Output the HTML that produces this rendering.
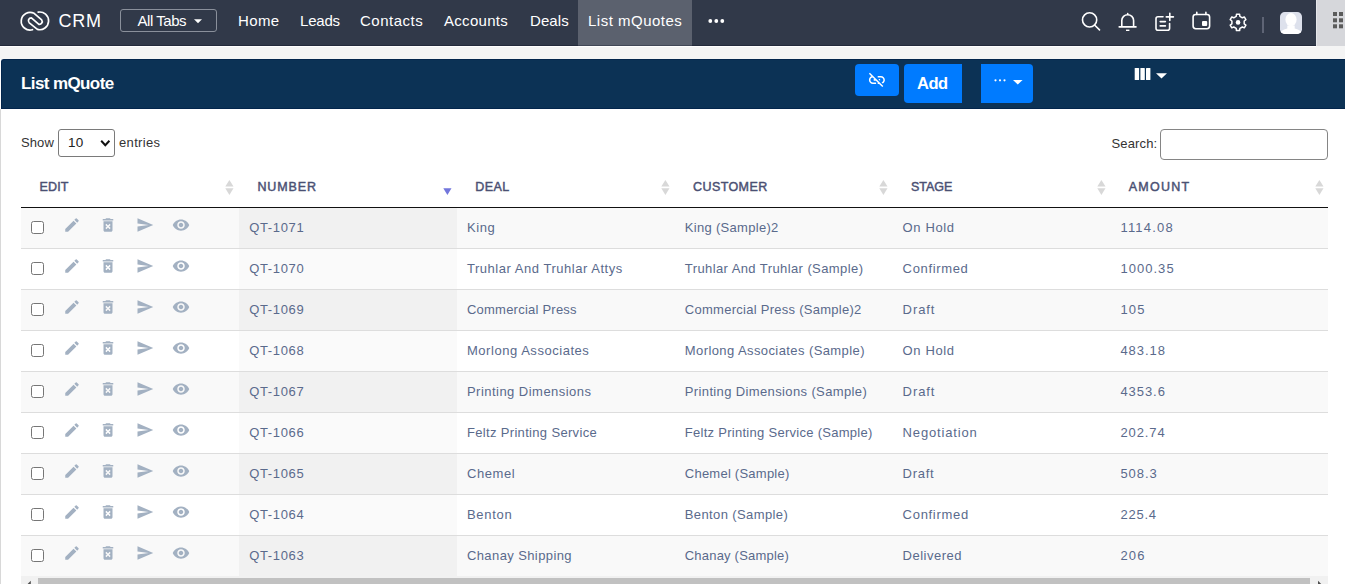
<!DOCTYPE html>
<html lang="en"><head><meta charset="utf-8"><title>List mQuote</title>
<style>
*{box-sizing:border-box}
html,body{margin:0;padding:0}
body{width:1345px;height:584px;overflow:hidden;background:#fff;font-family:"Liberation Sans",sans-serif;position:relative}
#nav{position:absolute;left:0;top:0;width:1345px;height:46px;background:#313949}
#nav:after{content:"";position:absolute;left:0;top:45px;width:1316px;height:1px;background:rgba(0,5,25,.28)}
#gap{position:absolute;left:0;top:46px;width:1345px;height:13px;background:#f4f4f4}
#gap:after{content:"";position:absolute;left:0;top:0;width:1316px;height:1px;background:#fff}
#nav .t{position:absolute;top:0;height:45px;line-height:41px;color:#fff;font-size:15px;white-space:nowrap}
#act{position:absolute;left:578px;top:0;width:114px;height:46px;background:#5b616e}
#crm{position:absolute;left:58.5px;top:0;line-height:42px;font-size:18px;color:#fff;letter-spacing:.8px}
#alltabs{position:absolute;left:120px;top:9px;width:97px;height:23px;border:1px solid #8a909b;border-radius:3px}
#grid{position:absolute;left:1316px;top:0;width:29px;height:46px;background:#d6d7db;border-left:1px solid #e6e6ea}
#navsvg{position:absolute;left:0;top:0}
#hdr{position:absolute;left:1px;top:59px;width:1344px;height:50px;background:#0c3255;border:1px solid #03254c;border-right:none;border-top-left-radius:3px}
#lb{position:absolute;left:0;top:109px;width:1px;height:475px;background:#d8d8d8}
#title{position:absolute;left:21px;top:59px;line-height:49px;color:#fff;font-weight:bold;font-size:17px;letter-spacing:-.6px;white-space:nowrap}
.btn{position:absolute;background:#007bff;color:#fff}
#b1{left:855px;top:64px;width:44px;height:32px;border-radius:4px}
#b2{left:904px;top:64px;width:58px;height:39px;border-radius:4px 0 0 4px}
#b3{left:981px;top:64px;width:52px;height:39px;border-radius:0 4px 4px 0}
#add{position:absolute;left:917px;top:64px;line-height:39px;font-size:16.5px;font-weight:bold;color:#fff;letter-spacing:-.5px}
#hsvg{position:absolute;left:0;top:59px}
.lbl{position:absolute;font-size:13px;color:#333;white-space:nowrap;line-height:18px;letter-spacing:.5px}
#sel{position:absolute;left:58px;top:129px;width:57px;height:28px;border:1px solid #7a7a7a;border-radius:3px;background:#fff}
#selv{position:absolute;left:68px;top:134px;font-size:13.5px;color:#222;line-height:18px;letter-spacing:.2px}
#srch{position:absolute;left:1160px;top:129px;width:168px;height:31px;border:1px solid #858585;border-radius:4px;background:#fff}
#tbl{position:absolute;left:21px;top:166px;width:1307px;border-collapse:collapse;table-layout:fixed;font-size:13px}
#tbl th{height:41px;text-align:left;padding:1px 0 0 18.6px;color:#4a5073;font-weight:normal;-webkit-text-stroke:.45px #4a5073;border-bottom:1px solid #111;font-size:12.5px;white-space:nowrap}
#tbl td{height:41px;padding:0 0 1px 10.3px;color:#5a6a8c;border-top:1px solid #ddd;white-space:nowrap;letter-spacing:.5px}
#tbl tbody tr:first-child td{border-top:1px solid #fff}
tr.odd td{background:#f9f9f9}
tr.odd td.s{background:#f1f1f1}
tr.even td{background:#fff}
tr.even td.s{background:#fafafa}
td.e{position:relative}
.cb{position:absolute;left:10px;top:13px;width:13px;height:13px;margin:0}
.ic{position:absolute;width:18px;height:18px;fill:#a3b1c2;top:8px}
.i1{left:41.7px}.i2{left:77.8px}.i3{left:114.7px}.i4{left:150.7px}
#ssvg{position:absolute;left:0;top:166px}
#sb{position:absolute;left:21px;top:576px;width:1307px;height:8px;background:#f1f1f1}
#sbt{position:absolute;left:38px;top:578px;width:1272px;height:6px;background:#c1c1c1}
</style></head><body>
<div id="nav">
<div id="act"></div>
<div id="crm">CRM</div>
<div id="alltabs"></div>
<div class="t" style="left:137.5px;letter-spacing:-.45px">All Tabs</div>
<div class="t" style="left:238px;letter-spacing:.4px">Home</div>
<div class="t" style="left:300px;letter-spacing:-.2px">Leads</div>
<div class="t" style="left:360px;letter-spacing:.5px">Contacts</div>
<div class="t" style="left:444px;letter-spacing:.3px">Accounts</div>
<div class="t" style="left:530px;letter-spacing:.1px">Deals</div>
<div class="t" style="left:588px;letter-spacing:.5px">List mQuotes</div>
<div id="grid"></div>
<svg id="navsvg" width="1345" height="45" viewBox="0 0 1345 45" fill="none" stroke="#fff" stroke-width="1.6" stroke-linecap="round" stroke-linejoin="round">
<path d="M32.5 29.7 A8.85 8.85 0 1 1 34.1 13.3 L41.7 19.9 A2.9 2.9 0 0 1 38.9 24.4 L31.4 17.9 A2.9 2.9 0 0 0 29.3 22.9 L37.4 29.4 A8.85 8.85 0 1 0 38.17 12.15" stroke-width="1.7"/>
<path d="M194 19.2h8l-4 4z" fill="#fff" stroke="none"/>
<circle cx="710.3" cy="21" r="1.9" fill="#fff" stroke="none"/><circle cx="716.3" cy="21" r="1.9" fill="#fff" stroke="none"/><circle cx="722.3" cy="21" r="1.9" fill="#fff" stroke="none"/>
<circle cx="1089.6" cy="19.9" r="7.1"/><path d="M1094.8 25.2L1099.5 29.9"/>
<path d="M1121.8 26.8V20.6a5.9 5.9 0 0 1 11.8 0V26.8M1119.2 26.9H1136M1127.7 13.6v1"/><rect x="1126" y="29.6" width="3.4" height="1.4" fill="#fff" stroke="none"/>
<path d="M1163 16.8H1158a2 2 0 0 0-2 2V28.3a2 2 0 0 0 2 2H1167.6a2 2 0 0 0 2-2V23.6M1160.2 21.6H1165.4M1160.2 25.9H1165.4M1169.8 13.2V20.4M1166.3 16.9H1173.4"/>
<rect x="1193.1" y="14.5" width="16.5" height="14.2" rx="2.6"/><path d="M1196.8 12.2V14.5M1205.9 12.2V14.5"/><rect x="1202" y="21.1" width="5.2" height="5" rx="1" fill="#fff" stroke="none"/>
<path d="M1236.21 16.38 L1236.47 14.25 L1239.63 14.25 L1239.89 16.38 L1242.35 17.79 L1244.31 16.95 L1245.90 19.70 L1244.19 20.98 L1244.19 23.82 L1245.90 25.10 L1244.31 27.85 L1242.35 27.01 L1239.89 28.42 L1239.63 30.55 L1236.47 30.55 L1236.21 28.42 L1233.75 27.01 L1231.79 27.85 L1230.20 25.10 L1231.91 23.82 L1231.91 20.98 L1230.20 19.70 L1231.79 16.95 L1233.75 17.79Z" stroke-width="1.5"/><circle cx="1238.05" cy="22.4" r="2.3" fill="#fff" stroke="none"/>
<rect x="1262" y="17" width="2" height="16" fill="#5e6475" stroke="none"/>
<rect x="1280" y="12" width="22" height="22" rx="4.7" fill="#dde1ec" stroke="none"/>
<clipPath id="av"><rect x="1280" y="12" width="22" height="22" rx="4.7"/></clipPath>
<filter id="bl" x="-20%" y="-20%" width="140%" height="140%"><feGaussianBlur stdDeviation=".7"/></filter><g clip-path="url(#av)"><g filter="url(#bl)" fill="#fff" stroke="none"><ellipse cx="1291" cy="19.6" rx="5.6" ry="6.6"/><path d="M1279 36c0-5 4-6 8.300-7.500v-3h7.400v3c4.300 1.500 8.300 2.500 8.300 7.500z"/></g></g>
<g fill="#5b5b5b" stroke="none"><rect x="1333" y="12" width="4" height="4"/><rect x="1339" y="12" width="4" height="4"/><rect x="1333" y="18.300" width="4" height="4"/><rect x="1339" y="18.300" width="4" height="4"/><rect x="1333" y="24.300" width="4" height="4"/><rect x="1339" y="24.300" width="4" height="4"/></g>
</svg>
</div>
<div id="gap"></div>
<div id="hdr"></div>
<div id="lb"></div>
<div id="title">List mQuote</div>
<div class="btn" id="b1"></div><div class="btn" id="b2"></div><div class="btn" id="b3"></div>
<div id="add">Add</div>
<svg id="hsvg" width="1345" height="50" viewBox="0 59 1345 50" fill="#fff">
<g transform="translate(867.300 70.300) scale(0.8)"><path d="M17 7h-4v1.900h4c1.710 0 3.100 1.390 3.100 3.100 0 1.430-.98 2.630-2.310 2.980l1.460 1.460C20.880 15.610 22 13.950 22 12c0-2.760-2.240-5-5-5zm-1 4h-2.190l2 2H16zM2 4.270l3.110 3.110C3.290 8.120 2 9.910 2 12c0 2.760 2.240 5 5 5h4v-1.900H7c-1.710 0-3.100-1.390-3.100-3.100 0-1.590 1.210-2.900 2.760-3.070L8.730 11H8v2h2.730L13 15.270V17h1.730l4.010 4L20 19.740 3.270 3 2 4.270z"/></g>
<circle cx="995.500" cy="80.300" r="1.100"/><circle cx="1000" cy="80.300" r="1.100"/><circle cx="1004.500" cy="80.300" r="1.100"/>
<path d="M1013 80h9.600l-4.800 4.600z"/>
<rect x="1134.700" y="68" width="4.400" height="12" rx=".6"/><rect x="1140.400" y="68" width="4.400" height="12" rx=".6"/><rect x="1146" y="68" width="4.400" height="12" rx=".6"/>
<path d="M1156 73.200h11l-5.500 5.200z"/>
</svg>
<div class="lbl" style="left:21px;top:134px;letter-spacing:.1px">Show</div>
<div id="sel"></div><div id="selv">10</div>
<svg style="position:absolute;left:100px;top:139px" width="11" height="9" viewBox="0 0 11 9" fill="none" stroke="#111" stroke-width="2"><path d="M1.200 1.800L5.300 6.200 9.400 1.800"/></svg>
<div class="lbl" style="left:119px;top:134px;letter-spacing:.35px">entries</div>
<div class="lbl" style="left:1111.5px;top:135px;letter-spacing:.15px">Search:</div>
<div id="srch"></div>
<table id="tbl"><thead><tr><th style="letter-spacing:.1px">EDIT</th><th style="letter-spacing:.9px">NUMBER</th><th style="letter-spacing:.4px">DEAL</th><th style="letter-spacing:.4px">CUSTOMER</th><th style="letter-spacing:0">STAGE</th><th style="letter-spacing:1.25px">AMOUNT</th></tr></thead>
<tbody>
<tr class="odd"><td class="e"><input type="checkbox" class="cb"><svg class="ic i1" viewBox="0 0 24 24"><path d="M3 17.25V21h3.75L17.81 9.94l-3.75-3.75L3 17.25zM20.71 7.04a1 1 0 0 0 0-1.41l-2.34-2.34a1 1 0 0 0-1.41 0l-1.83 1.83 3.75 3.75 1.83-1.83z"/></svg><svg class="ic i2" viewBox="0 0 24 24"><path d="M6 19c0 1.1.9 2 2 2h8c1.1 0 2-.9 2-2V7H6v12zm2.46-7.12l1.41-1.41L12 12.59l2.12-2.12 1.41 1.41L13.41 14l2.12 2.12-1.41 1.41L12 15.41l-2.12 2.12-1.41-1.41L10.59 14l-2.13-2.12zM15.5 4l-1-1h-5l-1 1H5v2h14V4z"/></svg><svg class="ic i3" viewBox="0 0 24 24"><path d="M2.01 21L23 12 2.01 3 2 10l15 2-15 2z"/></svg><svg class="ic i4" viewBox="0 0 24 24"><path d="M12 4.500C7 4.500 2.730 7.610 1 12c1.730 4.390 6 7.500 11 7.500s9.270-3.110 11-7.500c-1.730-4.390-6-7.500-11-7.500zM12 17c-2.760 0-5-2.240-5-5s2.240-5 5-5 5 2.240 5 5-2.240 5-5 5zm0-8c-1.660 0-3 1.340-3 3s1.340 3 3 3 3-1.340 3-3-1.340-3-3-3z"/></svg></td><td class="s" style="letter-spacing:0.67px">QT-1071</td><td style="letter-spacing:0.57px">King</td><td style="letter-spacing:0.30px">King (Sample)2</td><td style="letter-spacing:0.63px">On Hold</td><td style="letter-spacing:1.20px">1114.08</td></tr>
<tr class="even"><td class="e"><input type="checkbox" class="cb"><svg class="ic i1" viewBox="0 0 24 24"><path d="M3 17.25V21h3.75L17.81 9.94l-3.75-3.75L3 17.25zM20.71 7.04a1 1 0 0 0 0-1.41l-2.34-2.34a1 1 0 0 0-1.41 0l-1.83 1.83 3.75 3.75 1.83-1.83z"/></svg><svg class="ic i2" viewBox="0 0 24 24"><path d="M6 19c0 1.1.9 2 2 2h8c1.1 0 2-.9 2-2V7H6v12zm2.46-7.12l1.41-1.41L12 12.59l2.12-2.12 1.41 1.41L13.41 14l2.12 2.12-1.41 1.41L12 15.41l-2.12 2.12-1.41-1.41L10.59 14l-2.13-2.12zM15.5 4l-1-1h-5l-1 1H5v2h14V4z"/></svg><svg class="ic i3" viewBox="0 0 24 24"><path d="M2.01 21L23 12 2.01 3 2 10l15 2-15 2z"/></svg><svg class="ic i4" viewBox="0 0 24 24"><path d="M12 4.500C7 4.500 2.730 7.610 1 12c1.730 4.390 6 7.500 11 7.500s9.270-3.110 11-7.500c-1.730-4.390-6-7.500-11-7.500zM12 17c-2.760 0-5-2.240-5-5s2.240-5 5-5 5 2.240 5 5-2.240 5-5 5zm0-8c-1.660 0-3 1.340-3 3s1.340 3 3 3 3-1.340 3-3-1.340-3-3-3z"/></svg></td><td class="s" style="letter-spacing:0.67px">QT-1070</td><td style="letter-spacing:0.53px">Truhlar And Truhlar Attys</td><td style="letter-spacing:0.41px">Truhlar And Truhlar (Sample)</td><td style="letter-spacing:0.65px">Confirmed</td><td style="letter-spacing:1.03px">1000.35</td></tr>
<tr class="odd"><td class="e"><input type="checkbox" class="cb"><svg class="ic i1" viewBox="0 0 24 24"><path d="M3 17.25V21h3.75L17.81 9.94l-3.75-3.75L3 17.25zM20.71 7.04a1 1 0 0 0 0-1.41l-2.34-2.34a1 1 0 0 0-1.41 0l-1.83 1.83 3.75 3.75 1.83-1.83z"/></svg><svg class="ic i2" viewBox="0 0 24 24"><path d="M6 19c0 1.1.9 2 2 2h8c1.1 0 2-.9 2-2V7H6v12zm2.46-7.12l1.41-1.41L12 12.59l2.12-2.12 1.41 1.41L13.41 14l2.12 2.12-1.41 1.41L12 15.41l-2.12 2.12-1.41-1.41L10.59 14l-2.13-2.12zM15.5 4l-1-1h-5l-1 1H5v2h14V4z"/></svg><svg class="ic i3" viewBox="0 0 24 24"><path d="M2.01 21L23 12 2.01 3 2 10l15 2-15 2z"/></svg><svg class="ic i4" viewBox="0 0 24 24"><path d="M12 4.500C7 4.500 2.730 7.610 1 12c1.730 4.390 6 7.500 11 7.500s9.270-3.110 11-7.500c-1.730-4.390-6-7.500-11-7.500zM12 17c-2.760 0-5-2.240-5-5s2.240-5 5-5 5 2.240 5 5-2.240 5-5 5zm0-8c-1.660 0-3 1.340-3 3s1.340 3 3 3 3-1.340 3-3-1.340-3-3-3z"/></svg></td><td class="s" style="letter-spacing:0.67px">QT-1069</td><td style="letter-spacing:0.23px">Commercial Press</td><td style="letter-spacing:0.27px">Commercial Press (Sample)2</td><td style="letter-spacing:0.90px">Draft</td><td style="letter-spacing:1.20px">105</td></tr>
<tr class="even"><td class="e"><input type="checkbox" class="cb"><svg class="ic i1" viewBox="0 0 24 24"><path d="M3 17.25V21h3.75L17.81 9.94l-3.75-3.75L3 17.25zM20.71 7.04a1 1 0 0 0 0-1.41l-2.34-2.34a1 1 0 0 0-1.41 0l-1.83 1.83 3.75 3.75 1.83-1.83z"/></svg><svg class="ic i2" viewBox="0 0 24 24"><path d="M6 19c0 1.1.9 2 2 2h8c1.1 0 2-.9 2-2V7H6v12zm2.46-7.12l1.41-1.41L12 12.59l2.12-2.12 1.41 1.41L13.41 14l2.12 2.12-1.41 1.41L12 15.41l-2.12 2.12-1.41-1.41L10.59 14l-2.13-2.12zM15.5 4l-1-1h-5l-1 1H5v2h14V4z"/></svg><svg class="ic i3" viewBox="0 0 24 24"><path d="M2.01 21L23 12 2.01 3 2 10l15 2-15 2z"/></svg><svg class="ic i4" viewBox="0 0 24 24"><path d="M12 4.500C7 4.500 2.730 7.610 1 12c1.730 4.390 6 7.500 11 7.500s9.270-3.110 11-7.500c-1.730-4.390-6-7.500-11-7.500zM12 17c-2.760 0-5-2.240-5-5s2.240-5 5-5 5 2.240 5 5-2.240 5-5 5zm0-8c-1.660 0-3 1.340-3 3s1.340 3 3 3 3-1.340 3-3-1.340-3-3-3z"/></svg></td><td class="s" style="letter-spacing:0.67px">QT-1068</td><td style="letter-spacing:0.54px">Morlong Associates</td><td style="letter-spacing:0.41px">Morlong Associates (Sample)</td><td style="letter-spacing:0.63px">On Hold</td><td style="letter-spacing:0.94px">483.18</td></tr>
<tr class="odd"><td class="e"><input type="checkbox" class="cb"><svg class="ic i1" viewBox="0 0 24 24"><path d="M3 17.25V21h3.75L17.81 9.94l-3.75-3.75L3 17.25zM20.71 7.04a1 1 0 0 0 0-1.41l-2.34-2.34a1 1 0 0 0-1.41 0l-1.83 1.83 3.75 3.75 1.83-1.83z"/></svg><svg class="ic i2" viewBox="0 0 24 24"><path d="M6 19c0 1.1.9 2 2 2h8c1.1 0 2-.9 2-2V7H6v12zm2.46-7.12l1.41-1.41L12 12.59l2.12-2.12 1.41 1.41L13.41 14l2.12 2.12-1.41 1.41L12 15.41l-2.12 2.12-1.41-1.41L10.59 14l-2.13-2.12zM15.5 4l-1-1h-5l-1 1H5v2h14V4z"/></svg><svg class="ic i3" viewBox="0 0 24 24"><path d="M2.01 21L23 12 2.01 3 2 10l15 2-15 2z"/></svg><svg class="ic i4" viewBox="0 0 24 24"><path d="M12 4.500C7 4.500 2.730 7.610 1 12c1.730 4.390 6 7.500 11 7.500s9.270-3.110 11-7.500c-1.730-4.390-6-7.500-11-7.500zM12 17c-2.760 0-5-2.240-5-5s2.240-5 5-5 5 2.240 5 5-2.240 5-5 5zm0-8c-1.660 0-3 1.340-3 3s1.340 3 3 3 3-1.340 3-3-1.340-3-3-3z"/></svg></td><td class="s" style="letter-spacing:0.67px">QT-1067</td><td style="letter-spacing:0.47px">Printing Dimensions</td><td style="letter-spacing:0.37px">Printing Dimensions (Sample)</td><td style="letter-spacing:0.90px">Draft</td><td style="letter-spacing:0.94px">4353.6</td></tr>
<tr class="even"><td class="e"><input type="checkbox" class="cb"><svg class="ic i1" viewBox="0 0 24 24"><path d="M3 17.25V21h3.75L17.81 9.94l-3.75-3.75L3 17.25zM20.71 7.04a1 1 0 0 0 0-1.41l-2.34-2.34a1 1 0 0 0-1.41 0l-1.83 1.83 3.75 3.75 1.83-1.83z"/></svg><svg class="ic i2" viewBox="0 0 24 24"><path d="M6 19c0 1.1.9 2 2 2h8c1.1 0 2-.9 2-2V7H6v12zm2.46-7.12l1.41-1.41L12 12.59l2.12-2.12 1.41 1.41L13.41 14l2.12 2.12-1.41 1.41L12 15.41l-2.12 2.12-1.41-1.41L10.59 14l-2.13-2.12zM15.5 4l-1-1h-5l-1 1H5v2h14V4z"/></svg><svg class="ic i3" viewBox="0 0 24 24"><path d="M2.01 21L23 12 2.01 3 2 10l15 2-15 2z"/></svg><svg class="ic i4" viewBox="0 0 24 24"><path d="M12 4.500C7 4.500 2.730 7.610 1 12c1.730 4.390 6 7.500 11 7.500s9.270-3.110 11-7.500c-1.730-4.390-6-7.500-11-7.500zM12 17c-2.760 0-5-2.240-5-5s2.240-5 5-5 5 2.240 5 5-2.240 5-5 5zm0-8c-1.660 0-3 1.340-3 3s1.340 3 3 3 3-1.340 3-3-1.340-3-3-3z"/></svg></td><td class="s" style="letter-spacing:0.67px">QT-1066</td><td style="letter-spacing:0.33px">Feltz Printing Service</td><td style="letter-spacing:0.28px">Feltz Printing Service (Sample)</td><td style="letter-spacing:0.84px">Negotiation</td><td style="letter-spacing:0.90px">202.74</td></tr>
<tr class="odd"><td class="e"><input type="checkbox" class="cb"><svg class="ic i1" viewBox="0 0 24 24"><path d="M3 17.25V21h3.75L17.81 9.94l-3.75-3.75L3 17.25zM20.71 7.04a1 1 0 0 0 0-1.41l-2.34-2.34a1 1 0 0 0-1.41 0l-1.83 1.83 3.75 3.75 1.83-1.83z"/></svg><svg class="ic i2" viewBox="0 0 24 24"><path d="M6 19c0 1.1.9 2 2 2h8c1.1 0 2-.9 2-2V7H6v12zm2.46-7.12l1.41-1.41L12 12.59l2.12-2.12 1.41 1.41L13.41 14l2.12 2.12-1.41 1.41L12 15.41l-2.12 2.12-1.41-1.41L10.59 14l-2.13-2.12zM15.5 4l-1-1h-5l-1 1H5v2h14V4z"/></svg><svg class="ic i3" viewBox="0 0 24 24"><path d="M2.01 21L23 12 2.01 3 2 10l15 2-15 2z"/></svg><svg class="ic i4" viewBox="0 0 24 24"><path d="M12 4.500C7 4.500 2.730 7.610 1 12c1.730 4.390 6 7.500 11 7.500s9.270-3.110 11-7.500c-1.730-4.390-6-7.500-11-7.500zM12 17c-2.760 0-5-2.240-5-5s2.240-5 5-5 5 2.240 5 5-2.240 5-5 5zm0-8c-1.660 0-3 1.340-3 3s1.340 3 3 3 3-1.340 3-3-1.340-3-3-3z"/></svg></td><td class="s" style="letter-spacing:0.67px">QT-1065</td><td style="letter-spacing:0.58px">Chemel</td><td style="letter-spacing:0.24px">Chemel (Sample)</td><td style="letter-spacing:0.70px">Draft</td><td style="letter-spacing:0.95px">508.3</td></tr>
<tr class="even"><td class="e"><input type="checkbox" class="cb"><svg class="ic i1" viewBox="0 0 24 24"><path d="M3 17.25V21h3.75L17.81 9.94l-3.75-3.75L3 17.25zM20.71 7.04a1 1 0 0 0 0-1.41l-2.34-2.34a1 1 0 0 0-1.41 0l-1.83 1.83 3.75 3.75 1.83-1.83z"/></svg><svg class="ic i2" viewBox="0 0 24 24"><path d="M6 19c0 1.1.9 2 2 2h8c1.1 0 2-.9 2-2V7H6v12zm2.46-7.12l1.41-1.41L12 12.59l2.12-2.12 1.41 1.41L13.41 14l2.12 2.12-1.41 1.41L12 15.41l-2.12 2.12-1.41-1.41L10.59 14l-2.13-2.12zM15.5 4l-1-1h-5l-1 1H5v2h14V4z"/></svg><svg class="ic i3" viewBox="0 0 24 24"><path d="M2.01 21L23 12 2.01 3 2 10l15 2-15 2z"/></svg><svg class="ic i4" viewBox="0 0 24 24"><path d="M12 4.500C7 4.500 2.730 7.610 1 12c1.730 4.390 6 7.500 11 7.500s9.270-3.110 11-7.500c-1.730-4.390-6-7.500-11-7.500zM12 17c-2.760 0-5-2.240-5-5s2.240-5 5-5 5 2.240 5 5-2.240 5-5 5zm0-8c-1.660 0-3 1.340-3 3s1.340 3 3 3 3-1.340 3-3-1.340-3-3-3z"/></svg></td><td class="s" style="letter-spacing:0.67px">QT-1064</td><td style="letter-spacing:0.70px">Benton</td><td style="letter-spacing:0.39px">Benton (Sample)</td><td style="letter-spacing:0.70px">Confirmed</td><td style="letter-spacing:0.75px">225.4</td></tr>
<tr class="odd"><td class="e"><input type="checkbox" class="cb"><svg class="ic i1" viewBox="0 0 24 24"><path d="M3 17.25V21h3.75L17.81 9.94l-3.75-3.75L3 17.25zM20.71 7.04a1 1 0 0 0 0-1.41l-2.34-2.34a1 1 0 0 0-1.41 0l-1.83 1.83 3.75 3.75 1.83-1.83z"/></svg><svg class="ic i2" viewBox="0 0 24 24"><path d="M6 19c0 1.1.9 2 2 2h8c1.1 0 2-.9 2-2V7H6v12zm2.46-7.12l1.41-1.41L12 12.59l2.12-2.12 1.41 1.41L13.41 14l2.12 2.12-1.41 1.41L12 15.41l-2.12 2.12-1.41-1.41L10.59 14l-2.13-2.12zM15.5 4l-1-1h-5l-1 1H5v2h14V4z"/></svg><svg class="ic i3" viewBox="0 0 24 24"><path d="M2.01 21L23 12 2.01 3 2 10l15 2-15 2z"/></svg><svg class="ic i4" viewBox="0 0 24 24"><path d="M12 4.500C7 4.500 2.730 7.610 1 12c1.730 4.390 6 7.500 11 7.500s9.270-3.110 11-7.500c-1.730-4.390-6-7.500-11-7.500zM12 17c-2.760 0-5-2.240-5-5s2.240-5 5-5 5 2.240 5 5-2.240 5-5 5zm0-8c-1.660 0-3 1.340-3 3s1.340 3 3 3 3-1.340 3-3-1.340-3-3-3z"/></svg></td><td class="s" style="letter-spacing:0.67px">QT-1063</td><td style="letter-spacing:0.40px">Chanay Shipping</td><td style="letter-spacing:0.20px">Chanay (Sample)</td><td style="letter-spacing:0.50px">Delivered</td><td style="letter-spacing:1.20px">206</td></tr>
</tbody></table>
<svg id="ssvg" width="1345" height="41" viewBox="0 166 1345 41">
<defs><g id="ud"><path d="M-4.100 186.600h8.200L0 180z"/><path d="M-4.100 188.200h8.200L0 194.900z"/></g></defs>
<g fill="#d8d8d8"><use href="#ud" x="229.400"/><use href="#ud" x="665.400"/><use href="#ud" x="883.400"/><use href="#ud" x="1101.400"/><use href="#ud" x="1319.400"/></g>
<path d="M443.300 188.200h8.200l-4.100 6.700z" fill="#7276dc"/>
</svg>
<div id="sb"></div><div id="sbt"></div>
<svg style="position:absolute;left:21px;top:576px" width="1307" height="8" viewBox="0 0 1307 8"><path d="M9.800 8V4.800L6.600 8z" fill="#505050"/><path d="M1297 4.800l3.200 3.200h-3.200z" fill="#505050"/></svg>
</body></html>
